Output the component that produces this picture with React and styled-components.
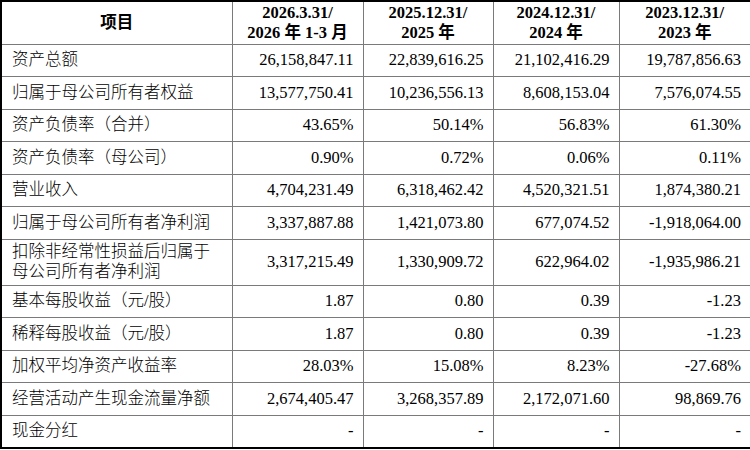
import styled, { createGlobalStyle } from "styled-components";

const GlobalStyle = createGlobalStyle`
  html, body {
    margin: 0;
    padding: 0;
    background: #ffffff;
  }
`;

const Table = styled.table`
  width: 750px;
  border-collapse: collapse;
  table-layout: fixed;
  border: 2px solid #000;
  font-family: "Liberation Serif", "Noto Sans CJK SC", serif;
  font-size: 16.5px;
  color: #000;
`;

const Col = styled.col`
  width: ${(p) => p.$w}px;
`;

const HeadRow = styled.tr`
  height: 43px;
`;

const Row = styled.tr`
  height: ${(p) => (p.$tall ? "46px" : "32.5px")};
`;

const HeadCell = styled.th`
  border: 1px solid #7a7a7a;
  border-top: 2px solid #000;
  font-weight: bold;
  text-align: center;
  vertical-align: middle;
  line-height: 20px;
  padding: 0 4px;
`;

const Label = styled.td`
  border: 1px solid #7a7a7a;
  text-align: left;
  padding: 0 8px 0 10px;
  line-height: 20px;
  font-weight: 300;
  white-space: pre-line;
`;

const Value = styled.td`
  border: 1px solid #7a7a7a;
  text-align: right;
  padding: 0 9px 0 4px;
  line-height: 20px;
`;

const widths = [231, 131, 130, 126, 132];

const columns = [
  ["2026.3.31/", "2026 年 1-3 月"],
  ["2025.12.31/", "2025 年"],
  ["2024.12.31/", "2024 年"],
  ["2023.12.31/", "2023 年"],
];

const rows = [
  ["资产总额", "26,158,847.11", "22,839,616.25", "21,102,416.29", "19,787,856.63"],
  ["归属于母公司所有者权益", "13,577,750.41", "10,236,556.13", "8,608,153.04", "7,576,074.55"],
  ["资产负债率（合并）", "43.65%", "50.14%", "56.83%", "61.30%"],
  ["资产负债率（母公司）", "0.90%", "0.72%", "0.06%", "0.11%"],
  ["营业收入", "4,704,231.49", "6,318,462.42", "4,520,321.51", "1,874,380.21"],
  ["归属于母公司所有者净利润", "3,337,887.88", "1,421,073.80", "677,074.52", "-1,918,064.00"],
  ["扣除非经常性损益后归属于\n母公司所有者净利润", "3,317,215.49", "1,330,909.72", "622,964.02", "-1,935,986.21"],
  ["基本每股收益（元/股）", "1.87", "0.80", "0.39", "-1.23"],
  ["稀释每股收益（元/股）", "1.87", "0.80", "0.39", "-1.23"],
  ["加权平均净资产收益率", "28.03%", "15.08%", "8.23%", "-27.68%"],
  ["经营活动产生现金流量净额", "2,674,405.47", "3,268,357.89", "2,172,071.60", "98,869.76"],
  ["现金分红", "-", "-", "-", "-"],
];

export default function App() {
  return (
    <>
      <GlobalStyle />
      <Table>
        <colgroup>
          {widths.map((w, i) => (
            <Col key={i} $w={w} />
          ))}
        </colgroup>
        <thead>
          <HeadRow>
            <HeadCell>项目</HeadCell>
            {columns.map(([a, b]) => (
              <HeadCell key={a}>
                {a}
                <br />
                {b}
              </HeadCell>
            ))}
          </HeadRow>
        </thead>
        <tbody>
          {rows.map(([label, ...vals]) => (
            <Row key={label} $tall={label.includes("\n")}>
              <Label>{label}</Label>
              {vals.map((v, i) => (
                <Value key={i}>{v}</Value>
              ))}
            </Row>
          ))}
        </tbody>
      </Table>
    </>
  );
}
